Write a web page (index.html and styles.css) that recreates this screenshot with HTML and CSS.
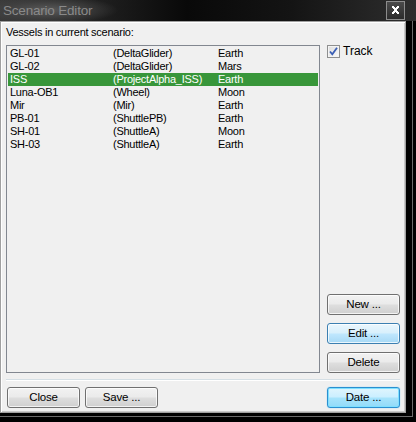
FILE: index.html
```html
<!DOCTYPE html>
<html>
<head>
<meta charset="utf-8">
<link rel="stylesheet" href="styles.css">
</head>
<body>
<div class="window">
  <div class="titlebar">
    <span class="title">Scenario Editor</span>
    <span class="close-btn"><svg width="9" height="8" viewBox="0 0 9 8"><path d="M1 0h2v1h1v1h1V1h1V0h2v2H7v1H6v2h1v1h1v2H6V7H5V6H4v1H3v1H1V6h1V5h1V3H2V2H1z" fill="#fff"/></svg></span>
  </div>
  <div class="frame">
    <div class="dialog">
      <div class="label">Vessels in current scenario:</div>
      <div class="main">
        <div class="listbox">
          <div class="row"><span class="c1">GL-01</span><span class="c2">(DeltaGlider)</span><span class="c3">Earth</span></div>
          <div class="row"><span class="c1">GL-02</span><span class="c2">(DeltaGlider)</span><span class="c3">Mars</span></div>
          <div class="row selected"><span class="c1">ISS</span><span class="c2">(ProjectAlpha_ISS)</span><span class="c3">Earth</span></div>
          <div class="row"><span class="c1">Luna-OB1</span><span class="c2">(Wheel)</span><span class="c3">Moon</span></div>
          <div class="row"><span class="c1">Mir</span><span class="c2">(Mir)</span><span class="c3">Earth</span></div>
          <div class="row"><span class="c1">PB-01</span><span class="c2">(ShuttlePB)</span><span class="c3">Earth</span></div>
          <div class="row"><span class="c1">SH-01</span><span class="c2">(ShuttleA)</span><span class="c3">Moon</span></div>
          <div class="row"><span class="c1">SH-03</span><span class="c2">(ShuttleA)</span><span class="c3">Earth</span></div>
        </div>
        <div class="side">
          <label class="check">
            <span class="box"><svg width="11" height="11" viewBox="0 0 11 11"><path d="M2 5.5 L4.3 8.3 L9 1.8" fill="none" stroke="#3b5fb5" stroke-width="1.8"/></svg></span>
            <span>Track</span>
          </label>
          <div class="btn-group">
            <div class="btn">New ...</div>
            <div class="btn hot">Edit ...</div>
            <div class="btn">Delete</div>
          </div>
        </div>
      </div>
      <div class="separator"></div>
      <div class="bottom">
        <div class="bottom-left">
          <div class="btn">Close</div>
          <div class="btn">Save ...</div>
        </div>
        <div class="btn default">Date ...</div>
      </div>
    </div>
  </div>
</div>
</body>
</html>
```
FILE: styles.css
```css
* { box-sizing: border-box; }
html, body { margin: 0; padding: 0; background: #000; }
body { font-family: "Liberation Sans", Arial, sans-serif; font-size: 11px; }

.window {
  width: 416px;
  height: 422px;
  background: #000;
  overflow: hidden;
}

.titlebar {
  height: 21px;
  display: flex;
  align-items: center;
  justify-content: space-between;
  padding: 0 11px 0 3px;
  background:
    radial-gradient(ellipse 70px 14px at 48px 10px, rgba(95,95,95,0.9) 0%, rgba(70,70,70,0.6) 60%, rgba(0,0,0,0) 100%),
    linear-gradient(to right, #3a3a3a 0%, #1e1e1e 25%, #090909 45%, #141414 70%, #2e2e2e 100%);
}
.title {
  color: #8a8a8a;
  font-size: 13.5px;
  letter-spacing: -0.2px;
  line-height: 21px;
}
.close-btn {
  width: 19px;
  height: 19px;
  margin-top: -1px;
  border: 1px solid #8c8c8c;
  background: linear-gradient(#4a4a4a, #2c2c2c);
  display: flex;
  align-items: center;
  justify-content: center;
}

.frame {
  width: 413px;
  padding-right: 6px;
  padding-bottom: 3px;
  border-right: 1px solid #6a6a6a;
  border-bottom: 1px solid #6a6a6a;
}

.dialog {
  width: 406px;
  height: 392px;
  background: #f0f0f0;
  border: 1px solid #a0a0a0;
  box-shadow: inset 1px 1px 0 #fff, inset -1px -1px 0 #c8c8c8;
  padding: 4px 5px 4px 5px;
  display: flex;
  flex-direction: column;
  color: #000;
}

.label {
  line-height: 13px;
  height: 13px;
  letter-spacing: -0.25px;
}

.main {
  margin-top: 6px;
  height: 328px;
  display: flex;
  gap: 7px;
}

.listbox {
  width: 314px;
  height: 328px;
  border: 1px solid #828790;
  background: #f0f0f0;
  padding: 1px 1px;
}
.row {
  display: flex;
  height: 13px;
  line-height: 13px;
  letter-spacing: -0.25px;
  white-space: nowrap;
}
.row.selected {
  background: #38963a;
  color: #fff;
}
.c1 { width: 105px; padding-left: 2px; }
.c2 { width: 105px; }
.c3 { flex: 1; }

.side {
  width: 73px;
  display: flex;
  flex-direction: column;
  justify-content: space-between;
}
.check {
  display: flex;
  align-items: center;
  gap: 3px;
  height: 13px;
  line-height: 13px;
  font-size: 12px;
}
.box {
  width: 13px;
  height: 13px;
  border: 1px solid #8e8f8f;
  background: linear-gradient(135deg, #dcdcdc, #fbfbfb);
  box-shadow: inset 0 0 0 1px #f4f4f4;
  display: flex;
  align-items: center;
  justify-content: center;
}

.btn-group {
  display: flex;
  flex-direction: column;
  gap: 8px;
}

.btn {
  width: 73px;
  height: 21px;
  border: 1px solid #707070;
  border-radius: 3px;
  background: linear-gradient(#f2f2f2 0%, #ebebeb 45%, #dddddd 55%, #cfcfcf 100%);
  box-shadow: inset 0 0 0 1px rgba(255,255,255,0.75);
  display: flex;
  align-items: center;
  justify-content: center;
  line-height: 13px;
  letter-spacing: -0.2px;
  font-size: 11.5px;
}
.btn.hot {
  border-color: #3c7fb1;
  background: linear-gradient(#eaf6fd 0%, #d9f0fc 45%, #bee6fd 55%, #a7d9f5 100%);
}
.btn.default {
  border-color: #2b8fd0;
  box-shadow: inset 0 0 0 1px #7fe0ff, 0 0 1px #40c0ff;
  background: linear-gradient(#e0f5fd 0%, #ccefff 45%, #a6e3fb 55%, #92dbf9 100%);
}

.separator {
  margin-top: 6px;
  height: 2px;
  border-top: 1px solid #d5dfe5;
  border-bottom: 1px solid #fff;
}

.bottom {
  margin-top: 6px;
  display: flex;
  justify-content: space-between;
  padding-left: 1px;
}
.bottom-left {
  display: flex;
  gap: 5px;
}
```
